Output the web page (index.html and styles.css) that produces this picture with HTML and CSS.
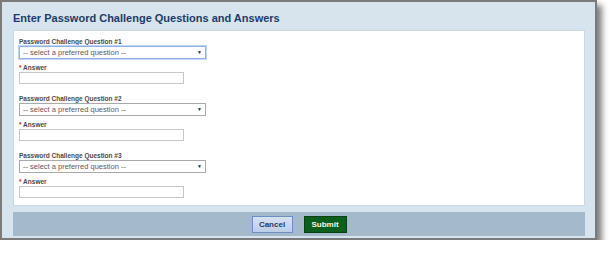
FILE: index.html
```html
<!DOCTYPE html>
<html>
<head>
<meta charset="utf-8">
<link rel="stylesheet" href="styles.css">
</head>
<body>
<div class="frame">
  <h1 class="title">Enter Password Challenge Questions and Answers</h1>
  <div class="panel">
    <div class="group">
      <div class="label">Password Challenge Question #1</div>
      <div class="select focused">
        <span class="select-text">-- select a preferred question --</span>
        <span class="arrow">&#9660;</span>
      </div>
      <div class="label answer-label"><span class="req">*</span> Answer</div>
      <input class="input" type="text">
    </div>
    <div class="group">
      <div class="label">Password Challenge Question #2</div>
      <div class="select">
        <span class="select-text">-- select a preferred question --</span>
        <span class="arrow">&#9660;</span>
      </div>
      <div class="label answer-label"><span class="req">*</span> Answer</div>
      <input class="input" type="text">
    </div>
    <div class="group">
      <div class="label">Password Challenge Question #3</div>
      <div class="select">
        <span class="select-text">-- select a preferred question --</span>
        <span class="arrow">&#9660;</span>
      </div>
      <div class="label answer-label"><span class="req">*</span> Answer</div>
      <input class="input" type="text">
    </div>
  </div>
  <div class="footer">
    <button class="btn btn-cancel">Cancel</button>
    <button class="btn btn-submit">Submit</button>
  </div>
</div>
</body>
</html>
```
FILE: styles.css
```css
html, body {
  margin: 0;
  padding: 0;
  background: #ffffff;
  font-family: "Liberation Sans", Arial, sans-serif;
}
.frame {
  box-sizing: border-box;
  width: 597px;
  height: 240px;
  border: 2px solid #7b7b7b;
  background: #d7e3ed;
  box-shadow: 5px 5px 6px rgba(0, 0, 0, 0.5);
  padding: 0 10px 0 11px;
  display: flex;
  flex-direction: column;
}
.title {
  margin: 0;
  height: 28px;
  line-height: 32px;
  font-size: 11px;
  font-weight: bold;
  color: #1d3b68;
}
.panel {
  box-sizing: border-box;
  height: 176px;
  background: #ffffff;
  border: 1px solid #c9d8e5;
  padding: 6px 5px 0 5px;
}
.group {
  display: flex;
  flex-direction: column;
  align-items: flex-start;
  margin-bottom: 10px;
}
.label {
  font-size: 6.5px;
  line-height: 9px;
  font-weight: bold;
  color: #4a4a4a;
}
.answer-label {
  margin-top: 4px;
}
.req {
  color: #c0282d;
}
.select {
  position: relative;
  box-sizing: border-box;
  width: 187px;
  height: 13px;
  border: 1px solid #a9a9a9;
  background: #ffffff;
  display: flex;
  align-items: center;
  padding-left: 3px;
}
.select.focused {
  border: 1px solid #8fb0e6;
  box-shadow: 0 0 0 1px #c3d5f3;
}
.select-text {
  font-size: 7.5px;
  line-height: 11px;
  color: #6d5454;
  white-space: nowrap;
}
.arrow {
  position: absolute;
  right: 3px;
  top: 2px;
  font-size: 5px;
  line-height: 7px;
  color: #222222;
}
.input {
  box-sizing: border-box;
  width: 165px;
  height: 12px;
  margin: 0;
  padding: 0;
  border: 1px solid #c6c6c6;
  background: #ffffff;
}
.footer {
  box-sizing: border-box;
  margin-top: 6px;
  height: 24px;
  background: #a4b9cc;
  display: flex;
  justify-content: center;
  align-items: center;
  gap: 11px;
}
.btn {
  box-sizing: border-box;
  height: 17px;
  padding: 0;
  margin: 0;
  font-family: "Liberation Sans", Arial, sans-serif;
  font-size: 8px;
  font-weight: bold;
  cursor: pointer;
}
.btn-cancel {
  width: 41px;
  background: linear-gradient(#d6e2f2, #bccde6);
  border: 1px solid #6d8fc6;
  color: #1d3b68;
}
.btn-submit {
  width: 43px;
  background: #0b5e1c;
  border: 1px solid #074214;
  color: #f4f7e8;
}
```
